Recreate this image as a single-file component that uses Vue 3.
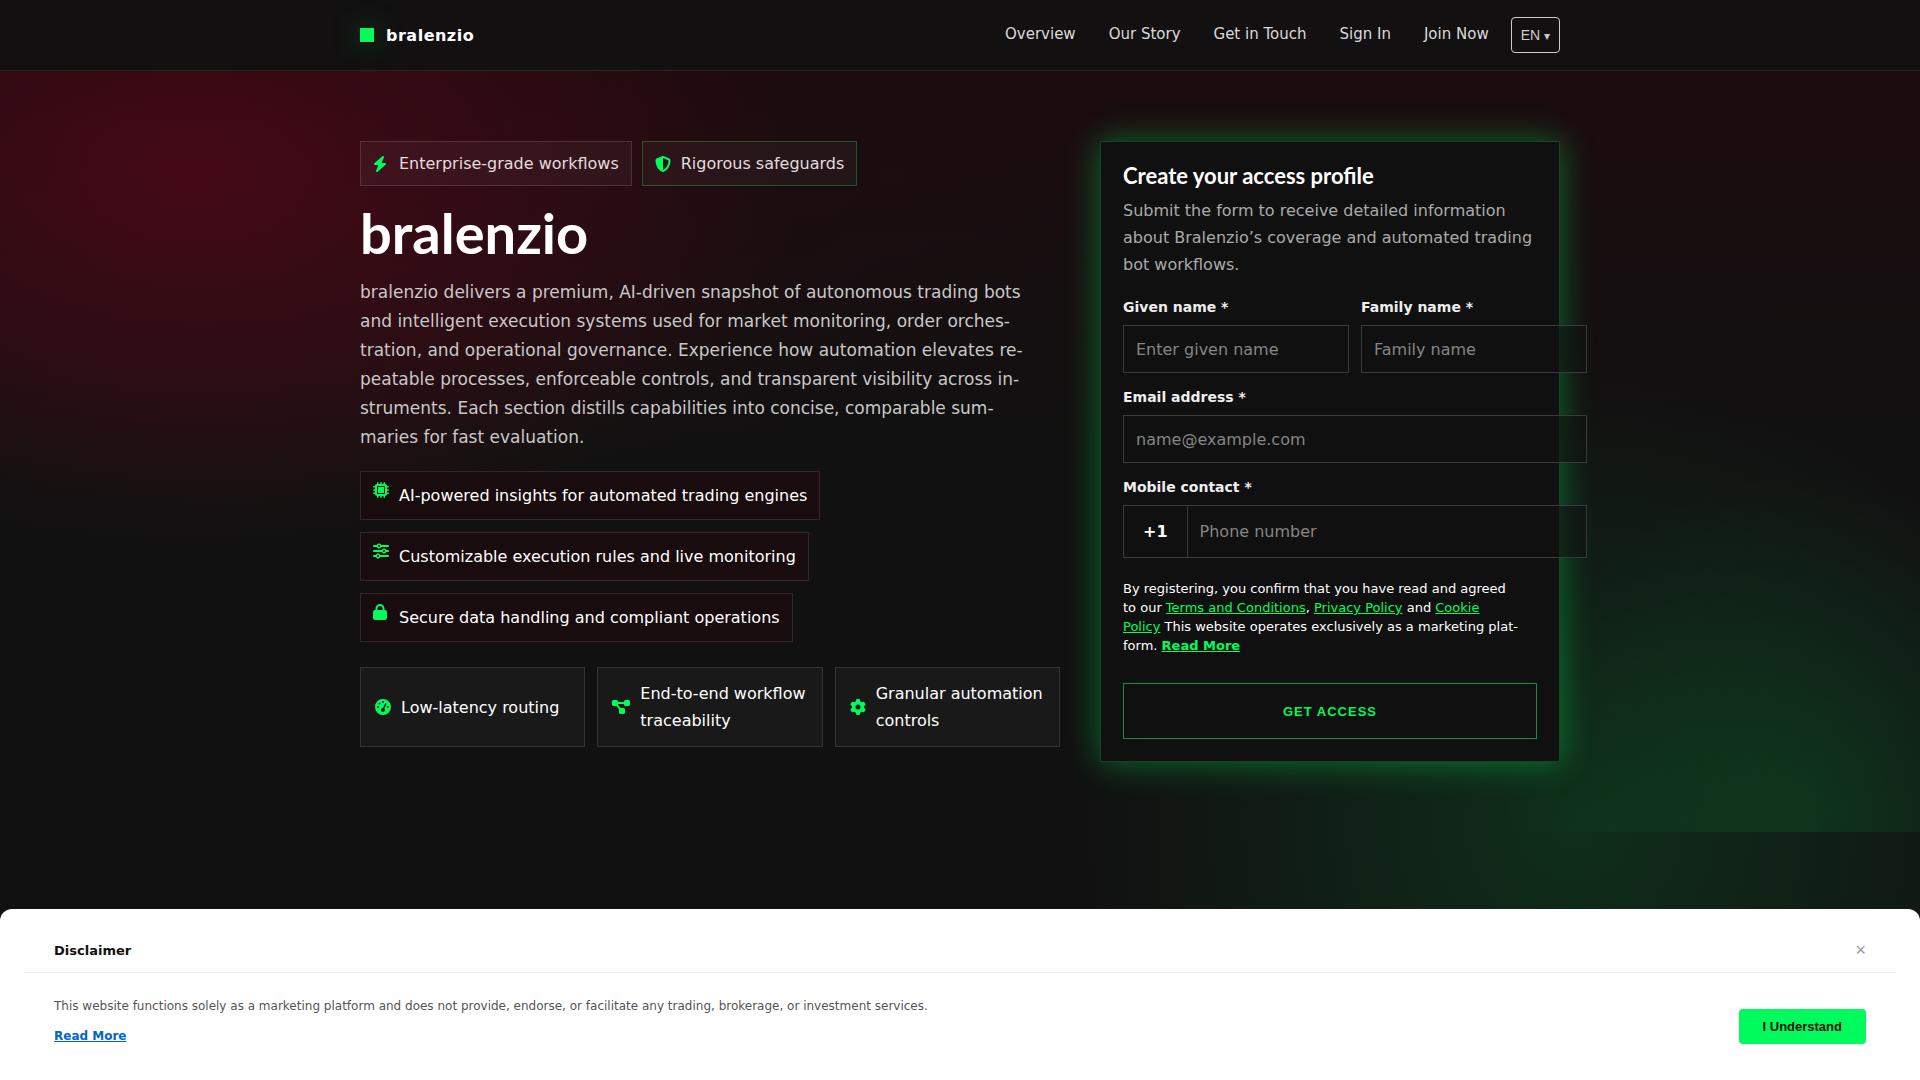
<script setup>
import { ref } from "vue"

const links = ["Overview", "Our Story", "Get in Touch", "Sign In", "Join Now"]

const icons = {
  bolt: {
    box: "0 0 512 512",
    d: "M349.4 44.6c5.9-13.7 1.5-29.7-10.6-38.5s-28.6-8-39.9 1.8l-256 224c-10 8.8-13.6 22.9-8.9 35.3S50.7 288 64 288H175.5L98.6 467.4c-5.9 13.7-1.5 29.7 10.6 38.5s28.6 8 39.9-1.8l256-224c10-8.8 13.6-22.9 8.9-35.3s-16.6-20.7-30-20.7H272.5L349.4 44.6z",
  },
  shield: {
    box: "0 0 512 512",
    d: "M256 0c4.6 0 9.2 1 13.4 2.9L457.7 82.8c22 9.3 38.4 31 38.3 57.2c-.5 99.2-41.3 280.7-213.6 363.2c-16.7 8-36.1 8-52.8 0C57.3 420.7 16.5 239.2 16 140c-.1-26.2 16.3-47.9 38.3-57.2L242.7 2.9C246.8 1 251.4 0 256 0zM256 66.8V444.8c138-66.8 175.1-214.8 176-303.4L256 66.8z",
  },
  chip: {
    box: "0 0 512 512",
    d: "M176 24c0-13.3-10.7-24-24-24s-24 10.7-24 24V64c-35.3 0-64 28.7-64 64H24c-13.3 0-24 10.7-24 24s10.7 24 24 24H64v56H24c-13.3 0-24 10.7-24 24s10.7 24 24 24H64v56H24c-13.3 0-24 10.7-24 24s10.7 24 24 24H64c0 35.3 28.7 64 64 64v40c0 13.3 10.7 24 24 24s24-10.7 24-24V448h56v40c0 13.3 10.7 24 24 24s24-10.7 24-24V448h56v40c0 13.3 10.7 24 24 24s24-10.7 24-24V448c35.3 0 64-28.7 64-64h40c13.3 0 24-10.7 24-24s-10.7-24-24-24H448V280h40c13.3 0 24-10.7 24-24s-10.7-24-24-24H448V176h40c13.3 0 24-10.7 24-24s-10.7-24-24-24H448c0-35.3-28.7-64-64-64V24c0-13.3-10.7-24-24-24s-24 10.7-24 24V64H280V24c0-13.3-10.7-24-24-24s-24 10.7-24 24V64H176V24zM160 128H352c17.7 0 32 14.3 32 32V352c0 17.7-14.3 32-32 32H160c-17.7 0-32-14.3-32-32V160c0-17.7 14.3-32 32-32zM352 160H160V352H352V160z",
  },
  sliders: {
    box: "0 0 512 512",
    d: "M0 416c0 17.7 14.3 32 32 32l54.7 0c12.3 28.3 40.5 48 73.3 48s61-19.7 73.3-48L480 448c17.7 0 32-14.3 32-32s-14.3-32-32-32l-246.7 0c-12.3-28.3-40.5-48-73.3-48s-61 19.7-73.3 48L32 384c-17.7 0-32 14.3-32 32zm128 0a32 32 0 1 1 64 0 32 32 0 1 1-64 0zM320 256a32 32 0 1 1 64 0 32 32 0 1 1-64 0zm32-80c-32.8 0-61 19.7-73.3 48L32 224c-17.7 0-32 14.3-32 32s14.3 32 32 32l246.7 0c12.3 28.3 40.5 48 73.3 48s61-19.7 73.3-48l54.7 0c17.7 0 32-14.3 32-32s-14.3-32-32-32l-54.7 0c-12.3-28.3-40.5-48-73.3-48zM192 128a32 32 0 1 1 0-64 32 32 0 1 1 0 64zm73.3-64C253 35.7 224.8 16 192 16s-61 19.7-73.3 48L32 64C14.3 64 0 78.3 0 96s14.3 32 32 32l86.7 0c12.3 28.3 40.5 48 73.3 48s61-19.7 73.3-48L480 128c17.7 0 32-14.3 32-32s-14.3-32-32-32L265.3 64z",
  },
  lock: {
    box: "0 0 512 512",
    d: "M144 144v48H304V144c0-44.2-35.8-80-80-80s-80 35.8-80 80zM80 192V144C80 64.5 144.5 0 224 0s144 64.5 144 144v48h16c35.3 0 64 28.7 64 64V448c0 35.3-28.7 64-64 64H64c-35.3 0-64-28.7-64-64V256c0-35.3 28.7-64 64-64H80z",
  },
  gauge: {
    box: "0 0 512 512",
    d: "M0 256a256 256 0 1 1 512 0A256 256 0 1 1 0 256zM288 96a32 32 0 1 0-64 0 32 32 0 1 0 64 0zM256 416c35.3 0 64-28.7 64-64c0-17.4-6.9-33.1-18.1-44.6L366 161.7c5.3-12.1-.2-26.3-12.3-31.6s-26.3 .2-31.6 12.3L257.9 288c-.6 0-1.3 0-1.9 0c-35.3 0-64 28.7-64 64s28.7 64 64 64zM176 144a32 32 0 1 0-64 0 32 32 0 1 0 64 0zM96 288a32 32 0 1 0 0-64 32 32 0 1 0 0 64zm352-32a32 32 0 1 0-64 0 32 32 0 1 0 64 0z",
  },
  diagram: {
    box: "0 0 576 512",
    d: "M0 80C0 53.5 21.5 32 48 32h96c26.5 0 48 21.5 48 48V96H384V80c0-26.5 21.5-48 48-48h96c26.5 0 48 21.5 48 48v96c0 26.5-21.5 48-48 48H432c-26.5 0-48-21.5-48-48V160H192v16c0 1.7-.1 3.4-.3 5L272 288h96c26.5 0 48 21.5 48 48v96c0 26.5-21.5 48-48 48H272c-26.5 0-48-21.5-48-48V336c0-1.7 .1-3.4 .3-5L144 224H48c-26.5 0-48-21.5-48-48V80z",
  },
  gear: {
    box: "0 0 512 512",
    d: "M495.9 166.6c3.2 8.7 .5 18.4-6.4 24.6l-43.3 39.4c1.1 8.3 1.7 16.8 1.7 25.4s-.6 17.1-1.7 25.4l43.3 39.4c6.9 6.2 9.6 15.9 6.4 24.6c-4.4 11.9-9.7 23.3-15.8 34.3l-4.7 8.1c-6.6 11-14 21.4-22.1 31.2c-5.9 7.2-15.7 9.6-24.5 6.8l-55.7-17.7c-13.4 10.3-28.2 18.9-44 25.4l-12.5 57.1c-2 9.1-9 16.3-18.2 17.8c-13.8 2.3-28 3.5-42.5 3.5s-28.7-1.2-42.5-3.5c-9.2-1.5-16.2-8.7-18.2-17.8l-12.5-57.1c-15.8-6.5-30.6-15.1-44-25.4L83.1 425.9c-8.8 2.8-18.6 .3-24.5-6.8c-8.1-9.8-15.5-20.2-22.1-31.2l-4.7-8.1c-6.1-11-11.4-22.4-15.8-34.3c-3.2-8.7-.5-18.4 6.4-24.6l43.3-39.4C64.6 273.1 64 264.6 64 256s.6-17.1 1.7-25.4L22.4 191.2c-6.9-6.2-9.6-15.9-6.4-24.6c4.4-11.9 9.7-23.3 15.8-34.3l4.7-8.1c6.6-11 14-21.4 22.1-31.2c5.9-7.2 15.7-9.6 24.5-6.8l55.7 17.7c13.4-10.3 28.2-18.9 44-25.4l12.5-57.1c2-9.1 9-16.3 18.2-17.8C227.3 1.2 241.5 0 256 0s28.7 1.2 42.5 3.5c9.2 1.5 16.2 8.7 18.2 17.8l12.5 57.1c15.8 6.5 30.6 15.1 44 25.4l55.7-17.7c8.8-2.8 18.6-.3 24.5 6.8c8.1 9.8 15.5 20.2 22.1 31.2l4.7 8.1c6.1 11 11.4 22.4 15.8 34.3zM256 336a80 80 0 1 0 0-160 80 80 0 1 0 0 160z",
  },
}

const badges = [
  { icon: "bolt", text: "Enterprise-grade workflows" },
  { icon: "shield", text: "Rigorous safeguards", accent: true },
]

const features = [
  { icon: "chip", text: "AI-powered insights for automated trading engines" },
  { icon: "sliders", text: "Customizable execution rules and live monitoring" },
  { icon: "lock", text: "Secure data handling and compliant operations" },
]

const cards = [
  { icon: "gauge", text: "Low-latency routing" },
  { icon: "diagram", text: "End-to-end workflow traceability" },
  { icon: "gear", text: "Granular automation controls" },
]

const form = ref({ given: "", family: "", email: "", phone: "" })
const showDisclaimer = ref(true)
</script>

<template>
  <div class="page" lang="en">
    <header class="header">
      <div class="container header-row">
        <a class="brand" href="#"><span class="brand-mark" />bralenzio</a>
        <nav class="nav">
          <a v-for="link in links" :key="link" href="#">{{ link }}</a>
          <button class="lang" type="button">EN <small>▾</small></button>
        </nav>
      </div>
    </header>

    <main class="hero">
      <div class="container hero-grid">
        <section class="intro">
          <div class="badges">
            <span v-for="b in badges" :key="b.text" :class="['badge', { accent: b.accent }]">
              <svg class="icon" :viewBox="icons[b.icon].box"><path fill-rule="evenodd" :d="icons[b.icon].d" /></svg>
              {{ b.text }}
            </span>
          </div>
          <h1>bralenzio</h1>
          <p class="lead">
            bralenzio delivers a premium, AI-driven snapshot of autonomous trading bots and intelligent
            execution systems used for market monitoring, order orches&shy;tration, and operational governance.
            Experience how automation elevates re&shy;peatable processes, enforceable controls, and transparent
            visibility across in&shy;struments. Each section distills capabilities into concise, comparable
            sum&shy;maries for fast evaluation.
          </p>
          <ul class="features">
            <li v-for="f in features" :key="f.text">
              <svg class="icon" :viewBox="icons[f.icon].box"><path fill-rule="evenodd" :d="icons[f.icon].d" /></svg>
              {{ f.text }}
            </li>
          </ul>
          <div class="cards">
            <div v-for="c in cards" :key="c.text" class="card">
              <svg class="icon" :viewBox="icons[c.icon].box"><path fill-rule="evenodd" :d="icons[c.icon].d" /></svg>
              <span>{{ c.text }}</span>
            </div>
          </div>
        </section>

        <form class="signup" @submit.prevent>
          <h2>Create your access profile</h2>
          <p class="signup-text">
            Submit the form to receive detailed information about Bralenzio’s coverage and automated
            trading bot workflows.
          </p>
          <div class="fields">
            <div class="field">
              <label for="given">Given name *</label>
              <input id="given" v-model="form.given" type="text" placeholder="Enter given name">
            </div>
            <div class="field">
              <label for="family">Family name *</label>
              <input id="family" v-model="form.family" type="text" placeholder="Family name">
            </div>
            <div class="field wide">
              <label for="email">Email address *</label>
              <input id="email" v-model="form.email" type="email" placeholder="name@example.com">
            </div>
            <div class="field wide">
              <label for="phone">Mobile contact *</label>
              <div class="phone">
                <span class="prefix">+1</span>
                <input id="phone" v-model="form.phone" type="tel" placeholder="Phone number">
              </div>
            </div>
          </div>
          <p class="legal">
            By registering, you confirm that you have read and agreed to our
            <a href="#">Terms and Conditions</a>, <a href="#">Privacy Policy</a> and
            <a href="#">Cookie Policy</a> This website operates exclusively as a marketing
            plat&shy;form. <a class="more" href="#">Read More</a>
          </p>
          <button class="submit" type="submit">Get access</button>
        </form>
      </div>
    </main>

    <aside v-if="showDisclaimer" class="disclaimer">
      <div class="disclaimer-head">
        <strong>Disclaimer</strong>
        <button class="close" type="button" aria-label="Close" @click="showDisclaimer = false">×</button>
      </div>
      <div class="disclaimer-body">
        <div>
          <p>
            This website functions solely as a marketing platform and does not provide, endorse, or
            facilitate any trading, brokerage, or investment services.
          </p>
          <a href="#">Read More</a>
        </div>
        <button class="accept" type="button" @click="showDisclaimer = false">I Understand</button>
      </div>
    </aside>
  </div>
</template>

<style>
body {
  margin: 0;
  background: #111;
}
</style>

<style scoped>
.page {
  box-sizing: border-box;
  min-height: 100vh;
  font: 16px/27px "DejaVu Sans", sans-serif;
  color: #fff;
  background:
    radial-gradient(520px 480px at 82% 830px, rgba(0, 255, 94, 0.12), transparent 95%),
    radial-gradient(900px 460px at 16% 100px, rgba(130, 8, 30, 0.2), transparent 90%),
    #111;
}

.container {
  max-width: 1200px;
  margin: 0 auto;
}

.header {
  position: relative;
  z-index: 1;
  background: #121011;
  border-bottom: 1px solid #272526;
}

.header-row {
  display: flex;
  align-items: center;
  justify-content: space-between;
  height: 70px;
}

.brand {
  display: flex;
  align-items: center;
  gap: 12px;
  color: #fff;
  font-weight: bold;
  letter-spacing: 0.5px;
  text-decoration: none;
}

.brand-mark {
  width: 14px;
  height: 14px;
  background: #00fc5c;
  box-shadow: 0 0 30px rgba(0, 255, 94, 0.35);
}

.nav {
  display: flex;
  align-items: center;
  gap: 33px;
}

.nav a {
  padding-bottom: 2px;
  color: #dadada;
  font-size: 15px;
  text-decoration: none;
}

.lang {
  height: 36px;
  margin-left: -11px;
  padding: 0 9px;
  border: 1px solid #ccc;
  border-radius: 4px;
  background: none;
  color: #ccc;
  font: 14px "Liberation Sans", sans-serif;
}

.lang small {
  font-size: 12px;
}

.hero {
  padding: 70px 0;
  background:
    radial-gradient(640px 400px at 10% 100px, rgba(125, 5, 30, 0.4), transparent 95%),
    radial-gradient(320px 360px at 94% 740px, rgba(0, 255, 94, 0.09), transparent 95%),
    linear-gradient(#1c0b0f, transparent 50%);
}

.hero-grid {
  display: grid;
  grid-template-columns: minmax(0, 700fr) minmax(0, 460fr);
  gap: 40px;
}

.icon {
  flex: none;
  height: 16px;
  fill: #00fc5c;
}

.badges {
  display: flex;
  gap: 10px;
}

.badge {
  display: flex;
  align-items: center;
  gap: 10px;
  padding: 8px 12px;
  border: 1px solid rgba(255, 255, 255, 0.13);
  background: rgba(255, 255, 255, 0.04);
  color: #e2dcdd;
}

.badge.accent {
  border-color: rgba(0, 255, 94, 0.28);
}

h1,
h2 {
  margin: 0;
  font-family: Lato, sans-serif;
  font-weight: bold;
}

h1 {
  margin: 17px 0 15px;
  font-size: 56px;
  line-height: 60px;
}

.lead {
  max-width: 664px;
  margin: 0;
  color: #c8c8c8;
  font-size: 17px;
  line-height: 29px;
}

.features {
  display: flex;
  flex-direction: column;
  align-items: flex-start;
  gap: 12px;
  margin: 19px 0 25px;
  padding: 0;
  list-style: none;
}

.features li {
  display: flex;
  align-items: flex-start;
  gap: 10px;
  padding: 10px 12px;
  border: 1px solid #33262a;
  background: #190c0f;
}

.cards {
  display: grid;
  grid-template-columns: repeat(3, 1fr);
  gap: 12px;
}

.card {
  display: flex;
  align-items: center;
  gap: 10px;
  padding: 12px 14px;
  border: 1px solid #333;
  background: #191919;
}

.signup {
  padding: 22px;
  border: 1px solid #124523;
  background: #111011;
  box-shadow: 0 0 32px rgba(0, 255, 94, 0.38);
}

h2 {
  font-size: 22px;
  line-height: 24px;
}

.signup-text {
  margin: 9px 0 17px;
  color: #aaa;
}

/* the fields run past the right edge of the panel */
.fields {
  display: grid;
  grid-template-columns: 1fr 1fr;
  gap: 12px;
  margin-right: -50px;
}

.field {
  display: flex;
  flex-direction: column;
  gap: 6px;
}

.wide {
  grid-column: 1 / -1;
}

.field label {
  color: #eee;
  font-size: 14px;
  font-weight: bold;
  line-height: 24px;
}

.field input {
  box-sizing: border-box;
  width: 100%;
  height: 48px;
  padding: 0 12px;
  border: 1px solid #3a3a3a;
  background: rgba(17, 17, 17, 0.6);
  color: #fff;
  font: 16px "DejaVu Sans", sans-serif;
}

.field input::placeholder {
  color: #858585;
}

.phone {
  display: flex;
  border: 1px solid #3a3a3a;
  background: rgba(17, 17, 17, 0.6);
}

.prefix {
  padding: 12px 19px;
  border-right: 1px solid #3a3a3a;
  font-weight: bold;
}

.phone input {
  flex: 1;
  height: auto;
  border: 0;
  background: none;
}

.legal {
  margin: 21px 0 28px;
  padding-right: 17px;
  font-size: 13px;
  line-height: 19px;
}

.legal a {
  color: #00fc5c;
}

.legal .more {
  font-weight: bold;
}

.submit {
  width: 100%;
  height: 56px;
  border: 1px solid #0b9140;
  background: none;
  color: #00f55c;
  font: bold 13px "Liberation Sans", sans-serif;
  letter-spacing: 1px;
  text-transform: uppercase;
}

.disclaimer {
  position: fixed;
  right: 0;
  bottom: 0;
  left: 0;
  z-index: 2;
  padding: 24px 24px 30px;
  border-radius: 12px 12px 0 0;
  background: #fff;
  color: #555;
  font-size: 12px;
}

.disclaimer-head,
.disclaimer-body {
  display: flex;
  align-items: center;
  justify-content: space-between;
}

.disclaimer-head {
  padding: 4px 30px 8px;
  border-bottom: 1px solid #eee;
  color: #111;
  font-size: 13px;
}

.disclaimer-body {
  padding: 20px 30px 0;
}

.disclaimer p {
  margin: 0 0 3px;
}

.disclaimer a {
  color: #06c;
  font-weight: bold;
}

.close {
  padding: 0;
  border: 0;
  background: none;
  color: #999;
  font: 18px "Liberation Sans", sans-serif;
}

.accept {
  align-self: flex-end;
  height: 35px;
  margin-bottom: 6px;
  padding: 0 24px;
  border: 0;
  border-radius: 4px;
  background: #00fc5c;
  color: #111;
  font: bold 13px "Liberation Sans", sans-serif;
}
</style>
